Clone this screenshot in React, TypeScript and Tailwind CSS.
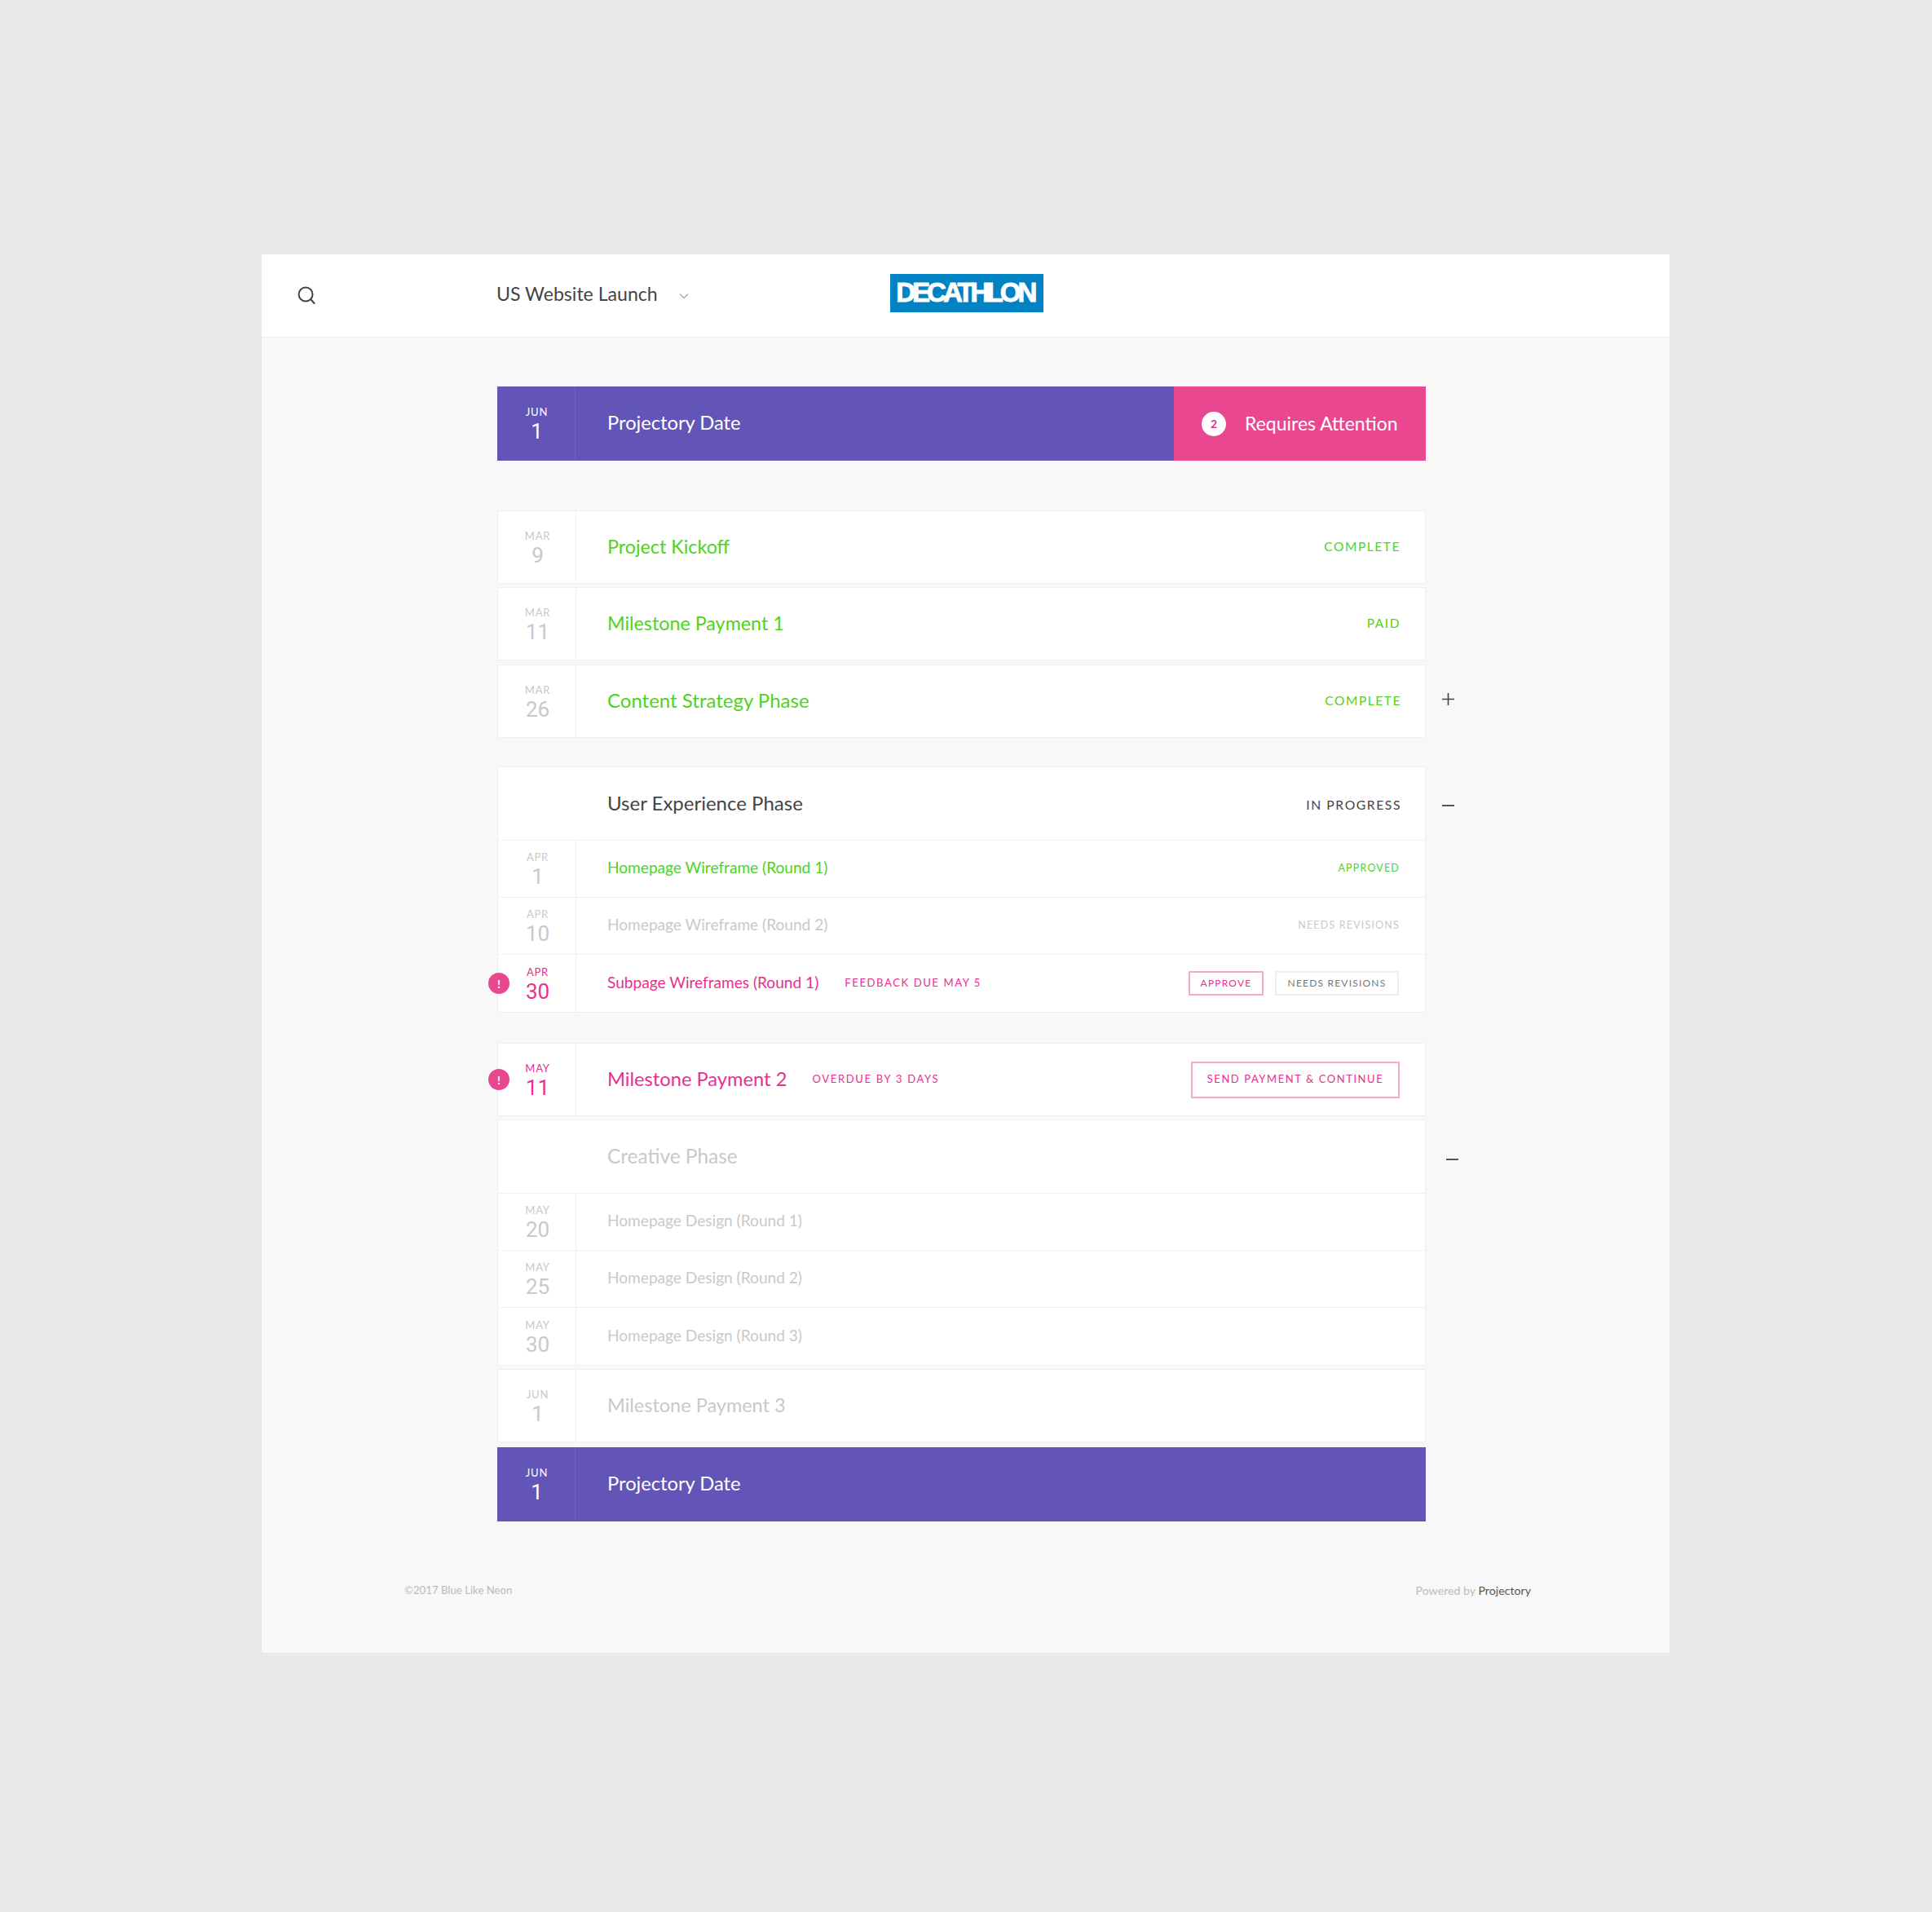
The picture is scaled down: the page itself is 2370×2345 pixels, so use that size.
import React from 'react';

const font = { fontFamily: 'Lato, "Open Sans", sans-serif' };
const green = 'text-[#4ed321]';
const grey = 'text-[#c9c9c9]';
const pink = 'text-[#e8308e]';

const DateCell = ({ month, day, tone = grey, divider = 'border-[#f0f0f0]' }: { month?: string; day?: string; tone?: string; divider?: string }) => (
  <div className={`w-[96px] shrink-0 h-full border-r flex flex-col items-center justify-center pl-[2px] ${divider} ${tone}`}>
    {month && <div className="text-[13px] leading-[16px] tracking-[0.06em] mt-[1px]">{month}</div>}
    {day && <div className="text-[26px] leading-[28px] mt-[2px]" style={{ fontFamily: 'Roboto, sans-serif' }}>{day}</div>}
  </div>
);

const Alert = () => (
  <div className="absolute left-[-12px] top-1/2 -translate-y-1/2 w-[26px] h-[26px] rounded-full bg-[#e94891] text-white flex items-center justify-center text-[14px] font-bold">!</div>
);

const SubStatus = ({ children, tone }: { children: React.ReactNode; tone: string }) => (
  <div className={`ml-auto pr-[31px] text-[12.4px] tracking-[0.1em] ${tone}`}>{children}</div>
);

const Row = ({ month, day, title, status, size = 'text-[23.6px]', pr = 'pr-[30px]', mb = 'mb-[4px]' }: { month: string; day: string; title: string; status: string; size?: string; pr?: string; mb?: string }) => (
  <div className={`h-[90px] bg-white border border-[#f0f0f0] flex items-center relative ${mb}`}>
    <DateCell month={month} day={day} />
    <span className={`ml-[38px] mb-[2px] ${size} ${green}`}>{title}</span>
    <div className={`ml-auto text-[15.5px] tracking-[0.1em] ${pr} ${green}`}>{status}</div>
  </div>
);

const SubRow = ({ month, day, title, tone, dateTone = grey, children }: { month: string; day: string; title: string; tone: string; dateTone?: string; children?: React.ReactNode }) => (
  <div className="h-[70px] border-b border-[#f0f0f0] flex items-center last:border-b-0 relative">
    <DateCell month={month} day={day} tone={dateTone} />
    <span className={`ml-[38px] mb-[2px] text-[19.1px] ${tone}`}>{title}</span>
    {children}
  </div>
);

export default function App() {
  return (
    <div style={font} className="w-[2370px] h-[2345px] bg-[#e9e9e9] pt-[312px] pl-[321px]">
      <div className="w-[1727px] h-[1715px] bg-[#f8f8f8] flex flex-col">
        <header className="h-[102px] bg-white border-b border-[#f0f0f0] flex items-center shrink-0">
          <svg className="ml-[43px] mb-[1px] w-[24px] h-[24px]" viewBox="0 0 24 24" fill="none" stroke="#444" strokeWidth="2" strokeLinecap="round">
            <circle cx="11" cy="11" r="8.5" />
            <path d="M17.5 17.5L21.5 22" />
          </svg>
          <span className="ml-[221px] mb-[4px] text-[23.1px] text-[#444]">US Website Launch</span>
          <svg className="ml-[26px] w-[12px] h-[8px]" viewBox="0 0 12 8" fill="none" stroke="#aaa" strokeWidth="1.3">
            <path d="M1 1.5L6 6.5L11 1.5" />
          </svg>
          <div className="ml-[247px] w-[188px] h-[47px] bg-[#0082c3] flex items-center justify-center mb-[7px] overflow-hidden">
            <span className="text-white text-[33px] font-bold tracking-[-0.12em] pr-[4px] [-webkit-text-stroke:1px_white]" style={{ fontFamily: '"Liberation Sans", sans-serif' }}>DECATHLON</span>
          </div>
        </header>

        <main className="w-[1139px] ml-[289px] mt-[60px]">
          <div className="h-[91px] flex text-white">
            <div className="flex-1 bg-[#6355b8] flex items-center">
              <DateCell month="JUN" day="1" tone="text-white" divider="border-[#7366c2]" />
              <span className="ml-[39px] mb-[1px] text-[23.7px]">Projectory Date</span>
            </div>
            <div className="w-[309px] bg-[#e94891] flex items-center pl-[34px]">
              <span className="w-[30px] h-[30px] rounded-full bg-white text-[#e8308e] flex items-center justify-center text-[14px] font-bold">2</span>
              <span className="ml-[23px] text-[23px]">Requires Attention</span>
            </div>
          </div>

          <div className="mt-[61px]">
            <Row month="MAR" day="9" title="Project Kickoff" status="COMPLETE" size="text-[23.3px]" />
            <Row month="MAR" day="11" title="Milestone Payment 1" status="PAID" size="text-[23.3px]" mb="mb-[5px]" />
            <div className="relative">
              <Row month="MAR" day="26" title="Content Strategy Phase" status="COMPLETE" size="text-[24px]" pr="pr-[29px]" mb="mb-0" />
              <svg className="absolute left-[1159px] top-[35px] w-[15px] h-[15px]" viewBox="0 0 15 15" stroke="#444" strokeWidth="1.6">
                <path d="M7.5 0V15M0 7.5H15" />
              </svg>
            </div>
          </div>

          <section className="relative mt-[35px] bg-white border border-[#f0f0f0]">
            <div className="absolute left-[1158px] top-[46px] w-[15px] h-[2px] bg-[#555]" />
            <div className="h-[90px] border-b border-[#f0f0f0] flex items-center pl-[134px] pr-[29px]">
              <span className="mb-[2px] text-[24px] text-[#444]">User Experience Phase</span>
              <span className="ml-auto mt-[4px] text-[15.7px] tracking-[0.1em] text-[#444]">IN PROGRESS</span>
            </div>
            <SubRow month="APR" day="1" title="Homepage Wireframe (Round 1)" tone={green}>
              <SubStatus tone={green}>APPROVED</SubStatus>
            </SubRow>
            <SubRow month="APR" day="10" title="Homepage Wireframe (Round 2)" tone={grey}>
              <SubStatus tone={grey}>NEEDS REVISIONS</SubStatus>
            </SubRow>
            <SubRow month="APR" day="30" title="Subpage Wireframes (Round 1)" tone={pink} dateTone={pink}>
              <Alert />
              <span className={`ml-[32px] text-[13.1px] tracking-[0.12em] ${pink}`}>FEEDBACK DUE MAY 5</span>
              <div className="ml-auto pr-[32px] flex gap-[14px]">
                <button className={`w-[92px] h-[30px] border-2 border-[#f7a8d0] text-[12px] tracking-[0.1em] ${pink}`}>APPROVE</button>
                <button className="w-[152px] h-[30px] border-2 border-[#eeeeee] text-[12px] tracking-[0.1em] text-[#777]">NEEDS REVISIONS</button>
              </div>
            </SubRow>
          </section>

          <div className="relative mt-[37px] h-[90px] bg-white border border-[#f0f0f0] flex items-center">
            <Alert />
            <DateCell month="MAY" day="11" tone={pink} />
            <span className={`ml-[38px] text-[23.7px] ${pink}`}>Milestone Payment 2</span>
            <span className={`ml-[31px] text-[13px] tracking-[0.13em] ${pink}`}>OVERDUE BY 3 DAYS</span>
            <button className={`ml-auto mr-[31px] w-[256px] h-[45px] border-2 border-[#f7a8d0] text-[13px] tracking-[0.12em] ${pink}`}>SEND PAYMENT &amp; CONTINUE</button>
          </div>

          <section className="relative mt-[4px] bg-white border border-[#f0f0f0]">
            <div className="absolute left-[1163px] top-[47px] w-[15px] h-[2px] bg-[#555]" />
            <div className="h-[90px] border-b border-[#f0f0f0] flex items-center pl-[134px]">
              <span className={`text-[24.4px] ${grey}`}>Creative Phase</span>
            </div>
            <SubRow month="MAY" day="20" title="Homepage Design (Round 1)" tone={grey} />
            <SubRow month="MAY" day="25" title="Homepage Design (Round 2)" tone={grey} />
            <SubRow month="MAY" day="30" title="Homepage Design (Round 3)" tone={grey} />
          </section>

          <div className="mt-[4px] h-[90px] bg-white border border-[#f0f0f0] flex items-center">
            <DateCell month="JUN" day="1" />
            <span className={`ml-[38px] text-[23.5px] ${grey}`}>Milestone Payment 3</span>
          </div>

          <div className="mt-[6px] h-[91px] bg-[#6355b8] flex items-center text-white">
            <DateCell month="JUN" day="1" tone="text-white" divider="border-[#7366c2]" />
            <span className="ml-[39px] mb-[1px] text-[23.7px]">Projectory Date</span>
          </div>
        </main>

        <footer className="mt-[74px] ml-[175px] w-[1382px] flex justify-between items-center text-[#bbb]">
          <span className="text-[13.2px]">©2017 Blue Like Neon</span>
          <span className="text-[14.2px]">Powered by <span className="text-[#555]">Projectory</span></span>
        </footer>
      </div>
    </div>
  );
}
